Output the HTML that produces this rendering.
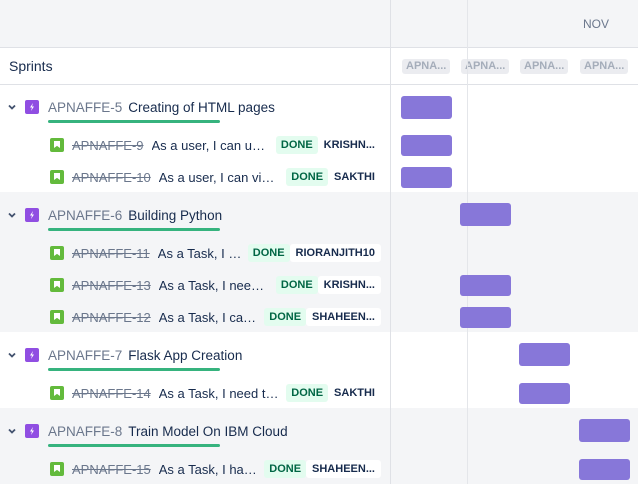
<!DOCTYPE html>
<html><head><meta charset="utf-8"><style>
*{box-sizing:border-box;margin:0;padding:0}
body{width:638px;height:484px;overflow:hidden;font-family:"Liberation Sans",sans-serif;background:#fff;position:relative;color:#172b4d}
.abs{position:absolute}
.hdr{left:0;top:0;width:638px;height:48px;background:#f4f5f7;border-bottom:1px solid #dfe1e6}
.vsplit{left:390px;top:0;width:1px;height:484px;background:#dfe1e6}
.vline{left:467px;top:0;width:1px;height:484px;background:#e4e6ea}
.grp{left:0;width:638px}
.row{position:absolute;left:0;width:390px;display:flex;align-items:center;font-size:13px}
.chev{position:absolute;left:8px;width:8px;height:8px}
.epicic{position:absolute;left:25px;width:14px;height:14px;background:#904ee2;border-radius:2px}
.storyic{width:14px;height:14px;background:#63ba3c;border-radius:2px;margin-left:50px;flex:none;position:relative}
.storyic:after{content:"";position:absolute;left:4px;top:3px;width:6px;height:7px;background:#fff;clip-path:polygon(0 0,100% 0,100% 100%,50% 70%,0 100%)}
.key{color:#6b778c;text-decoration:line-through;margin-left:8px;flex:none}
.sum{margin-left:8px;flex:1;min-width:0;white-space:nowrap;overflow:hidden;text-overflow:ellipsis}
.done{flex:none;background:#e3fcef;color:#006644;font-size:11px;font-weight:bold;padding:3px 5px;border-radius:3px;margin-left:6px}
.nm{flex:none;background:#fff;font-size:11px;font-weight:bold;padding:3px 6px;border-radius:3px;margin-right:9px;color:#172b4d}
.bar{position:absolute;height:21px;background:#8777d9;border-radius:3px;width:51px}
.chip{position:absolute;top:59px;height:15px;width:48px;background:#ebecf0;color:#a5adba;font-size:11px;font-weight:bold;border-radius:3px;padding:1px 4px;line-height:13px}
</style></head><body>
<div class="abs hdr"></div>
<div class="abs" style="left:583px;top:17px;font-size:12px;color:#6b778c">NOV</div>
<div class="abs" style="left:0;top:84px;width:638px;height:1px;background:#dfe1e6"></div>
<div class="abs" style="left:9px;top:58px;font-size:14px">Sprints</div>
<div class="chip" style="left:402px">APNA...</div>
<div class="chip" style="left:461px">APNA...</div>
<div class="chip" style="left:520px">APNA...</div>
<div class="chip" style="left:580px">APNA...</div>
<div class="abs grp" style="top:192px;height:140px;background:#f4f5f7"></div>
<div class="abs grp" style="top:408px;height:76px;background:#f4f5f7"></div>
<div class="abs vsplit"></div>
<div class="abs vline"></div>

<div class="row" style="top:88px;height:38px;font-size:14px"><svg class="chev" style="top:15px" viewBox="0 0 8 8"><path d="M1 2.5L4 5.5L7 2.5" stroke="#42526e" stroke-width="1.8" fill="none"/></svg><div class="epicic" style="top:12px"><svg width="14" height="14" viewBox="0 0 14 14"><path d="M8 3L5 7.5H7L6 11L9 6.5H7Z" fill="#fff"/></svg></div><span style="margin-left:48px;color:#6b778c;font-size:13.5px">APNAFFE-5</span><span style="margin-left:6px;font-size:13.5px">Creating of HTML pages</span></div>
<div class="abs" style="left:48px;top:120px;width:172px;height:3px;background:#36b37e;border-radius:2px"></div>
<div class="row" style="top:129px;height:32px"><div class="storyic"></div><span class="key">APNAFFE-9</span><span class="sum">As a user, I can upload</span><span class="done">DONE</span><span class="nm" style="background:transparent">KRISHN...</span></div>
<div class="row" style="top:161px;height:32px"><div class="storyic"></div><span class="key">APNAFFE-10</span><span class="sum">As a user, I can view the data</span><span class="done">DONE</span><span class="nm" style="background:transparent">SAKTHI</span></div>

<div class="row" style="top:196px;height:38px;font-size:14px"><svg class="chev" style="top:15px" viewBox="0 0 8 8"><path d="M1 2.5L4 5.5L7 2.5" stroke="#42526e" stroke-width="1.8" fill="none"/></svg><div class="epicic" style="top:12px"><svg width="14" height="14" viewBox="0 0 14 14"><path d="M8 3L5 7.5H7L6 11L9 6.5H7Z" fill="#fff"/></svg></div><span style="margin-left:48px;color:#6b778c;font-size:13.5px">APNAFFE-6</span><span style="margin-left:6px;font-size:13.5px">Building Python</span></div>
<div class="abs" style="left:48px;top:228px;width:172px;height:3px;background:#36b37e;border-radius:2px"></div>
<div class="row" style="top:237px;height:32px"><div class="storyic"></div><span class="key">APNAFFE-11</span><span class="sum">As a Task, I need</span><span class="done">DONE</span><span class="nm">RIORANJITH10</span></div>
<div class="row" style="top:269px;height:32px"><div class="storyic"></div><span class="key">APNAFFE-13</span><span class="sum">As a Task, I need to</span><span class="done">DONE</span><span class="nm">KRISHN...</span></div>
<div class="row" style="top:301px;height:32px"><div class="storyic"></div><span class="key">APNAFFE-12</span><span class="sum">As a Task, I can do</span><span class="done">DONE</span><span class="nm">SHAHEEN...</span></div>

<div class="row" style="top:336px;height:38px;font-size:14px"><svg class="chev" style="top:15px" viewBox="0 0 8 8"><path d="M1 2.5L4 5.5L7 2.5" stroke="#42526e" stroke-width="1.8" fill="none"/></svg><div class="epicic" style="top:12px"><svg width="14" height="14" viewBox="0 0 14 14"><path d="M8 3L5 7.5H7L6 11L9 6.5H7Z" fill="#fff"/></svg></div><span style="margin-left:48px;color:#6b778c;font-size:13.5px">APNAFFE-7</span><span style="margin-left:6px;font-size:13.5px">Flask App Creation</span></div>
<div class="abs" style="left:48px;top:368px;width:172px;height:3px;background:#36b37e;border-radius:2px"></div>
<div class="row" style="top:377px;height:32px"><div class="storyic"></div><span class="key">APNAFFE-14</span><span class="sum">As a Task, I need to do it</span><span class="done">DONE</span><span class="nm" style="background:transparent">SAKTHI</span></div>

<div class="row" style="top:412px;height:38px;font-size:14px"><svg class="chev" style="top:15px" viewBox="0 0 8 8"><path d="M1 2.5L4 5.5L7 2.5" stroke="#42526e" stroke-width="1.8" fill="none"/></svg><div class="epicic" style="top:12px"><svg width="14" height="14" viewBox="0 0 14 14"><path d="M8 3L5 7.5H7L6 11L9 6.5H7Z" fill="#fff"/></svg></div><span style="margin-left:48px;color:#6b778c;font-size:13.5px">APNAFFE-8</span><span style="margin-left:6px;font-size:13.5px">Train Model On IBM Cloud</span></div>
<div class="abs" style="left:48px;top:444px;width:172px;height:3px;background:#36b37e;border-radius:2px"></div>
<div class="row" style="top:453px;height:32px"><div class="storyic"></div><span class="key">APNAFFE-15</span><span class="sum">As a Task, I have to</span><span class="done">DONE</span><span class="nm">SHAHEEN...</span></div>

<div class="bar" style="left:401px;top:96px;height:23px"></div>
<div class="bar" style="left:401px;top:135px"></div>
<div class="bar" style="left:401px;top:167px"></div>
<div class="bar" style="left:460px;top:203px;height:23px"></div>
<div class="bar" style="left:460px;top:275px"></div>
<div class="bar" style="left:460px;top:307px"></div>
<div class="bar" style="left:519px;top:343px;height:23px"></div>
<div class="bar" style="left:519px;top:383px"></div>
<div class="bar" style="left:579px;top:419px;height:23px"></div>
<div class="bar" style="left:579px;top:459px"></div>
</body></html>
